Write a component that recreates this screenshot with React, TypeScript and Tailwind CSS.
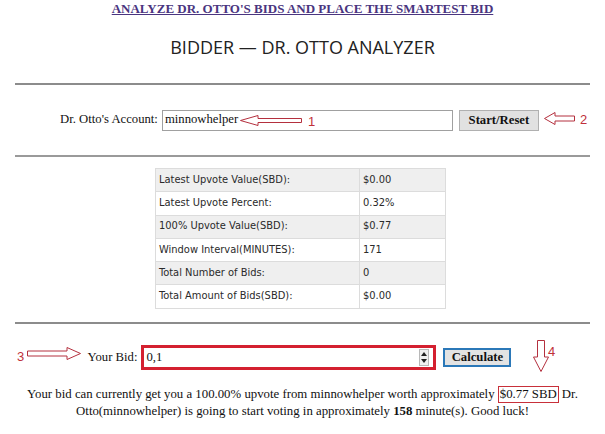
import React from 'react';

const rows: [string, string][] = [
  ['Latest Upvote Value(SBD):', '$0.00'],
  ['Latest Upvote Percent:', '0.32%'],
  ['100% Upvote Value(SBD):', '$0.77'],
  ['Window Interval(MINUTES):', '171'],
  ['Total Number of Bids:', '0'],
  ['Total Amount of Bids(SBD):', '$0.00'],
];

const serif = { fontFamily: '"Liberation Serif", "Times New Roman", serif' };
const sans = { fontFamily: '"Liberation Sans", Arial, sans-serif' };

// hollow arrow pointing left; head takes `head` px of the width
const ArrowLeft = ({ w, h, head, body }: { w: number; h: number; head: number; body: number }) => {
  const t = (h - body) / 2;
  return (
    <svg width={w} height={h} viewBox={`0 0 ${w} ${h}`}>
      <path
        d={`M0.5 ${h / 2} L${head} 0.5 L${head} ${t} L${w - 0.5} ${t} L${w - 0.5} ${h - t} L${head} ${h - t} L${head} ${h - 0.5} Z`}
        fill="white"
        stroke="#b4303e"
        strokeWidth="1"
      />
    </svg>
  );
};

const Num = ({ n, className }: { n: string; className: string }) => (
  <span className={`absolute text-[13px] leading-none text-[#c0303a] ${className}`} style={sans}>
    {n}
  </span>
);

export default function App() {
  return (
    <div className="relative w-[605px] h-[434px] bg-white overflow-hidden text-[#111] px-[15px]" style={serif}>
      <div className="text-center leading-[15px]">
        <a href="#" className="text-[13px] font-bold underline text-[#4a3580]">
          ANALYZE DR. OTTO'S BIDS AND PLACE THE SMARTEST BID
        </a>
      </div>
      <h1
        className="mt-[19px] text-center text-[18px] leading-[24px] text-[#222]"
        style={{ fontFamily: '"Open Sans", "DejaVu Sans", sans-serif' }}
      >
        BIDDER — DR. OTTO ANALYZER
      </h1>
      <hr className="mt-[24px] border-t-[2px] border-[#8c8c8c]" />

      <div className="mt-[24px] pr-[6px] flex items-center justify-center h-[22px] text-[12.7px]">
        <span className="mr-[4px]">Dr. Otto's Account:</span>
        <div className="relative w-[291px] h-[21px] border border-[#a0a0a0] flex items-center pl-[2px]">
          minnowhelper
          <div className="absolute left-[77px] top-[4px]">
            <ArrowLeft w={62} h={11} head={18} body={4} />
          </div>
          <Num n="1" className="left-[145px] top-[4px]" />
        </div>
        <div className="relative ml-[6px]">
          <button className="w-[80px] h-[21px] bg-[#e1e1e1] border border-[#b0b0b0] font-bold text-[12.7px] leading-none">
            Start/Reset
          </button>
          <div className="absolute left-[85px] top-[2px]">
            <ArrowLeft w={31} h={13} head={11} body={5} />
          </div>
          <Num n="2" className="left-[121px] top-[3px]" />
        </div>
      </div>

      <hr className="mt-[24px] border-t-[2px] border-[#9a9a9a]" />

      <table
        className="mt-[11px] ml-[140px] w-[291px] border-collapse text-[11px] text-[#2a2a2a]"
        style={{ fontFamily: 'Tahoma, "DejaVu Sans Condensed", "Liberation Sans", sans-serif' }}
      >
        <tbody>
          {rows.map(([k, v], i) => (
            <tr key={k} className={i % 2 === 0 ? 'bg-[#efefef]' : 'bg-white'}>
              <td className="w-[204px] h-[23.3px] pl-[3px] border border-[#dcdcdc]">{k}</td>
              <td className="pl-[3px] border border-[#dcdcdc]">{v}</td>
            </tr>
          ))}
        </tbody>
      </table>

      <hr className="mt-[13px] border-t-[2px] border-[#8c8c8c]" />

      <div className="relative mt-[21px] pr-[6px] flex items-center justify-center h-[25px] text-[12.7px]">
        <Num n="3" className="left-[2px] top-[5px]" />
        <div className="absolute left-[12px] top-[2px] rotate-180">
          <ArrowLeft w={54} h={13} head={14} body={5} />
        </div>
        <span className="mr-[4px]">Your Bid:</span>
        <div className="relative w-[295px] h-[25px] border-[3px] border-[#d42030] flex items-center pl-[2px]">
          0,1
          <div className="absolute right-[4px] top-[1px] w-[10px] h-[17px] border border-[#b8b8b8] bg-[#f0f0f0] flex flex-col items-center justify-around">
            <svg width="6" height="4" viewBox="0 0 6 4">
              <path d="M0 4 L3 0 L6 4 Z" fill="#222" />
            </svg>
            <svg width="6" height="4" viewBox="0 0 6 4">
              <path d="M0 0 L3 4 L6 0 Z" fill="#222" />
            </svg>
          </div>
        </div>
        <button className="ml-[7px] w-[68px] h-[19px] bg-[#e3e3e3] border-[2px] border-[#2b78b8] font-bold text-[12.7px] leading-none">
          Calculate
        </button>
        <div className="absolute left-[518px] top-[-5px]">
          <svg width="16" height="32" viewBox="0 0 16 32">
            <path d="M4.5 0.5 L11.5 0.5 L11.5 17 L15.5 17 L8 31.5 L0.5 17 L4.5 17 Z" fill="white" stroke="#b4303e" strokeWidth="1" />
          </svg>
        </div>
        <Num n="4" className="left-[533px] top-[0px]" />
      </div>

      <p className="mt-[16px] text-center text-[12.8px] leading-[16px]">
        Your bid can currently get you a 100.00% upvote from minnowhelper worth approximately{' '}
        <span className="inline-block border border-[#c8303a] px-[1px] leading-[15px]">$0.77 SBD</span> Dr.
        <br />
        Otto(minnowhelper) is going to start voting in approximately <b>158</b> minute(s). Good luck!
      </p>
    </div>
  );
}
